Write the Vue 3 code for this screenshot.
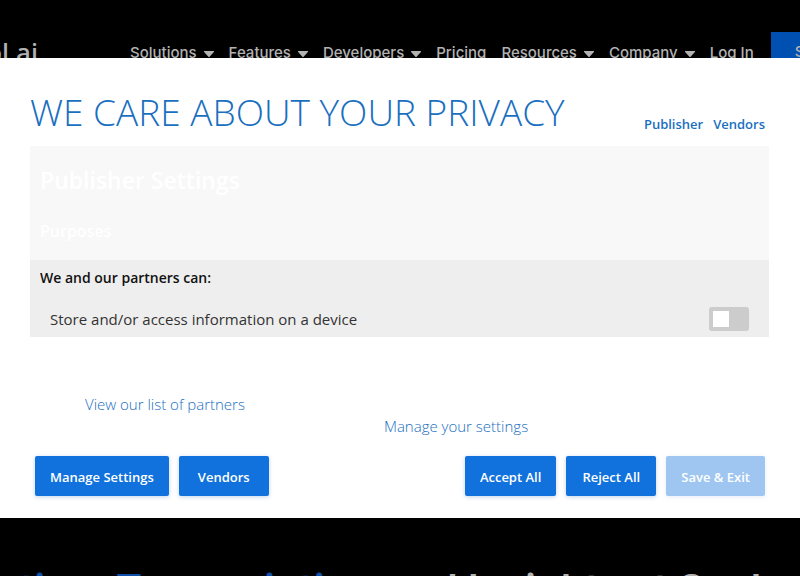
<template>
  <div class="page">
    <header class="site-header">
      <a href="#" class="logo">symbl.ai</a>
      <nav class="site-nav">
        <a v-for="item in navItems" :key="item.label" href="#" class="nav-link">
          {{ item.label }}
          <svg v-if="item.menu" class="caret" viewBox="0 0 10 6" aria-hidden="true">
            <path d="M0.5 0h9a0.5 0.5 0 0 1 0.4 0.9L5.6 5.7a0.8 0.8 0 0 1-1.2 0L0.1 0.9A0.5 0.5 0 0 1 0.5 0z" />
          </svg>
        </a>
      </nav>
      <a href="#" class="signup">Sign Up</a>
    </header>

    <h1 class="hero">
      <span class="hero-accent">Conversation, Transcription</span>
      <span>and Insights at Scale</span>
    </h1>

    <div class="overlay">
      <section class="dialog" role="dialog" aria-labelledby="privacy-title">
        <div class="dialog-header">
          <h2 id="privacy-title" class="dialog-title">WE CARE ABOUT YOUR PRIVACY</h2>
          <div class="tabs">
            <a href="#" class="tab">Publisher</a>
            <a href="#" class="tab">Vendors</a>
          </div>
        </div>

        <div class="settings">
          <div class="settings-head">
            <h3 class="settings-title">Publisher Settings</h3>
            <h4 class="settings-subtitle">Purposes</h4>
          </div>
          <div class="purposes">
            <p class="purposes-lead">We and our partners can:</p>
            <div v-for="p in purposes" :key="p.id" class="purpose">
              <label :for="p.id">{{ p.label }}</label>
              <input :id="p.id" v-model="p.enabled" type="checkbox" class="switch" />
            </div>
          </div>
        </div>

        <div class="footer-links">
          <a href="#" class="footer-link">View our list of partners</a>
          <a href="#" class="footer-link footer-link-low">Manage your settings</a>
        </div>

        <div class="dialog-footer">
          <div class="buttons">
            <button type="button" class="btn">Manage Settings</button>
            <button type="button" class="btn">Vendors</button>
          </div>
          <div class="buttons">
            <button type="button" class="btn">Accept All</button>
            <button type="button" class="btn">Reject All</button>
            <button type="button" class="btn" :disabled="!changed">Save &amp; Exit</button>
          </div>
        </div>
      </section>
    </div>
  </div>
</template>

<script setup>
import { computed, ref } from 'vue'

const navItems = [
  { label: 'Solutions', menu: true },
  { label: 'Features', menu: true },
  { label: 'Developers', menu: true },
  { label: 'Pricing' },
  { label: 'Resources', menu: true },
  { label: 'Company', menu: true },
  { label: 'Log In' }
]

const purposes = ref([
  { id: 'store-access', label: 'Store and/or access information on a device', enabled: false }
])

const changed = computed(() => purposes.value.some((p) => p.enabled))
</script>

<style>
body {
  margin: 0;
  background: #000000;
}
</style>

<style scoped>
.page {
  height: 100vh;
  overflow: hidden;
  background: #000000;
  color: #b2b2b2;
  font-family: Inter, "Open Sans", sans-serif;
}

a {
  text-decoration: none;
}

/* site behind the dialog */
.site-header {
  display: flex;
  align-items: center;
  height: 40px;
  padding-top: 32px;
}

.logo {
  flex: none;
  display: flex;
  justify-content: flex-end;
  width: 38px;
  margin-right: 92px;
  color: #b2b2b2;
  font-family: "Noto Sans", sans-serif;
  font-size: 26px;
  font-weight: 500;
}

.site-nav {
  flex: none;
  display: flex;
  gap: 15px;
}

.nav-link {
  display: flex;
  align-items: center;
  gap: 7px;
  color: #b2b2b2;
  font-size: 15px;
  font-weight: 500;
  white-space: nowrap;
}

.caret {
  width: 10px;
  height: 6px;
  margin-top: 4px;
  fill: currentColor;
}

.signup {
  flex: none;
  margin-left: 17px;
  padding: 0 24px;
  background: #0050b2;
  color: #b2b2b2;
  font-size: 15px;
  font-weight: 500;
  line-height: 40px;
}

.hero {
  display: flex;
  justify-content: flex-end;
  gap: 12px;
  margin: 487px 15px 0 0;
  font-size: 40px;
  font-weight: 600;
  line-height: 60px;
  white-space: nowrap;
}

.hero-accent {
  color: #0f4fa8;
}

/* consent dialog */
.overlay {
  position: fixed;
  inset: 0;
  display: flex;
  align-items: center;
}

.dialog {
  box-sizing: border-box;
  width: 100%;
  padding: 29px 31px 22px 30px;
  background: #ffffff;
  color: #333333;
  font-family: "Open Sans", sans-serif;
}

.dialog-header {
  display: flex;
  justify-content: space-between;
  align-items: flex-end;
  padding: 0 4px 9px 0;
}

.dialog-title {
  margin: 0;
  color: #1a6fbf;
  font-size: 37px;
  font-weight: 300;
  line-height: 50px;
}

.tabs {
  display: flex;
  gap: 10px;
}

.tab {
  color: #1a6fbf;
  font-size: 13px;
  font-weight: 600;
  line-height: 26px;
}

.settings-head {
  padding: 20px 10px 18px;
  background: #f8f8f8;
  color: #ffffff;
}

.settings-title {
  margin: 0 0 26px;
  font-size: 23px;
  font-weight: 600;
  line-height: 28px;
}

.settings-subtitle {
  margin: 0;
  font-size: 16px;
  font-weight: 600;
  line-height: 22px;
}

.purposes {
  padding: 8px 20px 6px 10px;
  background: #eeeeee;
}

.purposes-lead {
  margin: 0 0 19px;
  color: #111111;
  font-size: 14px;
  font-weight: 600;
  line-height: 20px;
}

.purpose {
  display: flex;
  justify-content: space-between;
  align-items: center;
  padding-left: 10px;
  font-size: 15px;
}

.switch {
  appearance: none;
  width: 40px;
  height: 24px;
  margin: 0;
  padding: 4px;
  border-radius: 3px;
  background: #cccccc;
}

.switch::before {
  content: "";
  display: block;
  width: 16px;
  height: 16px;
  background: #ffffff;
}

.switch:checked {
  background: #1172dd;
}

.switch:checked::before {
  margin-left: auto;
}

.footer-links {
  display: flex;
  gap: 139px;
  padding: 56px 55px 19px;
}

.footer-link {
  color: #1a6fbf;
  font-size: 15px;
  font-weight: 300;
  line-height: 22px;
}

.footer-link-low {
  margin-top: 22px;
}

.dialog-footer {
  display: flex;
  justify-content: space-between;
  padding: 0 4px 0 5px;
}

.buttons {
  display: flex;
  gap: 10px;
}

.btn {
  min-width: 90px;
  height: 40px;
  padding: 2px 15px 0;
  border: none;
  border-radius: 2px;
  background: #1172dd;
  box-shadow: 0 1px 4px rgba(0, 80, 180, 0.25);
  color: #ffffff;
  font-family: inherit;
  font-size: 13px;
  font-weight: 600;
}

.btn:disabled {
  opacity: 0.4;
}
</style>
